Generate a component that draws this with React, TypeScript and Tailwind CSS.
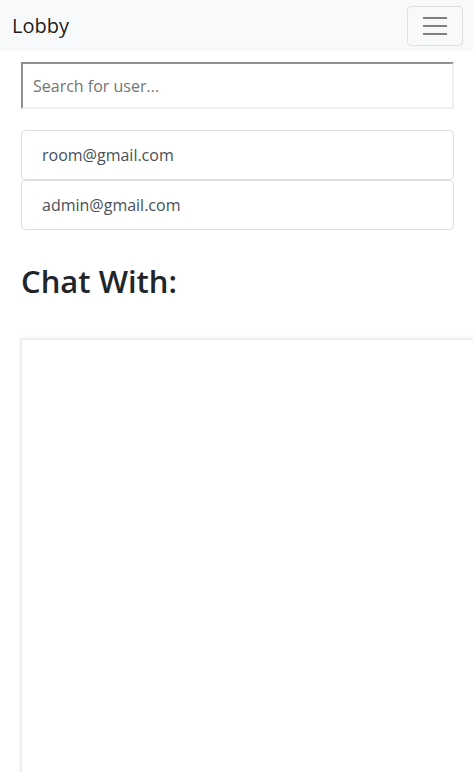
import React from "react";

const users = ["room@gmail.com", "admin@gmail.com"];

const Navbar: React.FC = () => (
  <nav className="flex h-[51px] items-center justify-between bg-[#f8f9fa] pl-3 pr-[10px]">
    <span className="text-[20px] leading-none text-black/90">Lobby</span>
    <button className="flex h-10 w-[56px] flex-col items-center justify-center gap-[6px] rounded-[4px] border border-black/10">
      <span className="block h-[2px] w-6 bg-[#808080]" />
      <span className="block h-[2px] w-6 bg-[#808080]" />
      <span className="block h-[2px] w-6 bg-[#808080]" />
    </button>
  </nav>
);

export default function App() {
  return (
    <div
      className="h-[772px] overflow-hidden bg-white text-[#212529]"
      style={{ fontFamily: '"Open Sans", "Noto Sans", sans-serif' }}
    >
      <Navbar />
      <div className="pl-[21px] pr-[19px] pt-[11px]">
        <input
          className="h-[47px] w-full border-2 border-b-[#f0f0f0] border-l-[#8f8f8f] border-r-[#f0f0f0] border-t-[#8f8f8f] px-[10px] text-[16px] outline-none placeholder:text-[#757575]"
          placeholder="Search for user..."
        />
        <ul className="mt-[21px] flex flex-col">
          {users.map((u) => (
            <li
              key={u}
              className="flex h-[50px] items-center rounded-[4px] border border-[#dfdfdf] px-5 text-[16px] text-[#495057]"
            >
              {u}
            </li>
          ))}
        </ul>
        <h2 className="mt-[33px] text-[31px] font-semibold leading-[1.2] text-[#212529]">
          Chat With:
        </h2>
      </div>
      <div className="ml-[21px] mt-[39px] h-[440px] w-[480px] border border-[#ececec] bg-white shadow-[0_0_4px_rgba(0,0,0,0.15)]" />
    </div>
  );
}
